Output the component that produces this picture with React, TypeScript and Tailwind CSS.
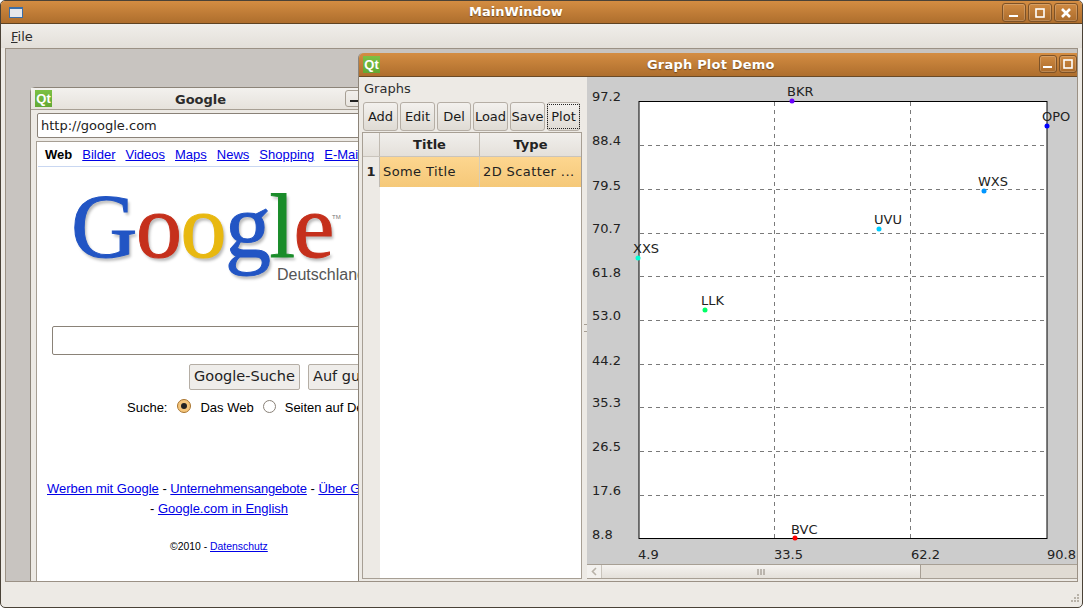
import type { ReactNode } from 'react'

const ui = { fontFamily: '"DejaVu Sans", sans-serif' }
const web = { fontFamily: '"Liberation Sans", Arial, sans-serif' }

const yTicks: [string, number][] = [['97.2', 96], ['88.4', 140], ['79.5', 185], ['70.7', 228], ['61.8', 272], ['53.0', 315], ['44.2', 360], ['35.3', 402], ['26.5', 446], ['17.6', 490], ['8.8', 534]]
const xTicks: [string, number][] = [['4.9', 638], ['33.5', 774], ['62.2', 911], ['90.8', 1047]]
const hGrid = [145, 189, 233, 276, 320, 364, 407, 451, 495]
const points = [
  { name: 'BKR', x: 792, y: 101, lx: 787, ly: 92, c: '#6a00ff' },
  { name: 'OPO', x: 1047, y: 126, lx: 1042, ly: 117, c: '#0000ff' },
  { name: 'WXS', x: 984, y: 191, lx: 978, ly: 182, c: '#0096ff' },
  { name: 'UVU', x: 879, y: 229, lx: 874, ly: 220, c: '#00ccff' },
  { name: 'XXS', x: 638, y: 258, lx: 633, ly: 249, c: '#00ffd5' },
  { name: 'LLK', x: 705, y: 310, lx: 701, ly: 301, c: '#00ff66' },
  { name: 'BVC', x: 795, y: 538, lx: 791, ly: 530, c: '#ff0000' },
]

function QtLogo() {
  return (
    <span className="flex h-[17px] w-[17px] shrink-0 items-center justify-center bg-gradient-to-b from-[#7cc043] to-[#62a833] text-[13px] leading-none font-bold text-white" style={web}>
      Qt
    </span>
  )
}

function WmButton({ kind, small }: { kind: 'min' | 'max' | 'close'; small?: boolean }) {
  return (
    <div className={`flex items-center justify-center rounded-[3px] border border-[#7d5227] bg-gradient-to-b from-[#cf8a42] to-[#ab6c2c] shadow-[inset_0_0_0_1px_rgba(255,255,255,0.18)] ${small ? 'h-[18px] w-[18px]' : 'h-[19px] w-[24px]'}`}>
      <svg width="12" height="12" viewBox="0 0 12 12">
        {kind === 'min' && <rect x="1" y="8" width="9" height="2" fill="#fff" />}
        {kind === 'max' && <rect x="2" y="2" width="8" height="8" fill="none" stroke="#fff" strokeWidth="1.6" />}
        {kind === 'close' && <path d="M2 2L10 10M10 2L2 10" stroke="#fff" strokeWidth="2.6" />}
      </svg>
    </div>
  )
}

function ToolButton({ children, w, focus }: { children: ReactNode; w: string; focus?: boolean }) {
  return (
    <div className={`flex h-[29px] items-center justify-center rounded-[3px] border border-[#b5aea5] bg-gradient-to-b from-[#f3f1ee] to-[#dfdbd4] text-[13px] text-[#1a1a1a] ${w}`}>
      {focus ? <span className="border border-dotted border-[#222] px-[3px] py-[3px] leading-[17px]">{children}</span> : children}
    </div>
  )
}

function Link({ children }: { children: ReactNode }) {
  return <span className="text-[#0000e6] underline">{children}</span>
}

function GoogleWindow() {
  return (
    <div className="absolute top-[38px] left-[24px] flex h-[500px] w-[340px] flex-col rounded-t-[5px] border border-[#8c8479] bg-[#edeae5]">
      <div className="relative flex h-[22px] shrink-0 items-center border-b border-[#a79f94] bg-gradient-to-b from-[#f3f1ee] to-[#e6e2dc] pl-[4px]">
        <QtLogo />
        <span className="absolute top-[2px] left-[144px] text-[13px] font-bold text-[#2c2c2c]" style={ui}>Google</span>
        <div className="absolute left-[314px] h-[17px] w-[24px] rounded-[3px] border border-[#a79f94]">
          <div className="mt-[9px] ml-[4px] h-[2px] w-[9px] bg-[#222]" />
        </div>
      </div>
      <div className="flex h-[31px] shrink-0 items-center pl-[6px]">
        <div className="flex h-[25px] w-[330px] items-center rounded-[2px] border border-[#8a8278] bg-white pl-[3px] text-[13px] text-[#222]" style={ui}>
          http://google.com
        </div>
      </div>
      <div className="ml-[5px] flex-1 overflow-hidden border-t border-l border-[#a79f94] bg-white whitespace-nowrap text-black" style={web}>
        <div className="mx-[1px] flex h-[25px] items-center gap-[10px] border-b border-[#c9d7f1] pt-[2px] pl-[7px] text-[13px]">
          <b>Web</b>
          <Link>Bilder</Link>
          <Link>Videos</Link>
          <Link>Maps</Link>
          <Link>News</Link>
          <Link>Shopping</Link>
          <Link>E-Mail</Link>
        </div>
        {/* logo */}
        <div className="relative mt-[13px] h-[130px] w-[320px]">
          <div className="absolute top-[-9px] left-[34px] flex text-[92px] leading-[110px] tracking-[-1.5px] [-webkit-text-stroke:1px_currentColor] [text-shadow:2px_3px_3px_rgba(0,0,0,0.28)]" style={{ fontFamily: '"Liberation Serif", serif' }}>
            <span className="text-[#2255c4]">G</span>
            <span className="text-[#c5301c]">o</span>
            <span className="text-[#e8b810]">o</span>
            <span className="text-[#2255c4]">g</span>
            <span className="text-[#1a8c2a]">l</span>
            <span className="text-[#c5301c]">e</span>
          </div>
          <span className="absolute top-[33px] left-[295px] text-[6px] text-[#777]">TM</span>
          <span className="absolute top-[83px] left-[240px] text-[16px] text-[#555]">Deutschland</span>
        </div>
        <div className="mt-[16px] ml-[15px] h-[29px] w-[340px] rounded-[2px] border border-[#8a8278] bg-white" />
        <div className="mt-[9px] ml-[152px] flex gap-[8px] text-[14.5px] text-[#222]" style={ui}>
          <div className="flex h-[26px] w-[111px] shrink-0 items-center justify-center rounded-[2px] border border-[#b5aea5] bg-[#efedea]">Google-Suche</div>
          <div className="flex h-[26px] w-[120px] shrink-0 items-center rounded-[2px] border border-[#b5aea5] bg-[#efedea] pl-[4px]">Auf gut Glück!</div>
        </div>
        <div className="mt-[8px] ml-[90px] flex items-center text-[13px]">
          <span>Suche:</span>
          <span className="mr-[9px] ml-[10px] -mt-[3px] flex h-[14px] w-[14px] shrink-0 items-center justify-center rounded-full border border-[#a8742f] bg-[#f5c67c]">
            <span className="h-[6px] w-[6px] rounded-full bg-[#222]" />
          </span>
          <span>Das Web</span>
          <span className="mr-[9px] ml-[9px] -mt-[3px] h-[13px] w-[13px] shrink-0 rounded-full border border-[#8a8278] bg-white" />
          <span>Seiten auf Deutschland</span>
        </div>
        <div className="mt-[61px] ml-[10px] text-[13px]">
          <Link>Werben mit Google</Link> - <span className="tracking-[-0.15px]"><Link>Unternehmensangebote</Link></span> - <Link>Über Google</Link>
        </div>
        <div className="mt-[1px] ml-[113px] text-[13px]">
          - <Link>Google.com in English</Link>
        </div>
        <div className="mt-[20px] ml-[133px] text-[10.4px]">
          ©2010 - <Link>Datenschutz</Link>
        </div>
      </div>
    </div>
  )
}

function GraphsPanel() {
  return (
    <div className="flex w-[225px] shrink-0 flex-col bg-[#edeae5]" style={ui}>
      <div className="flex h-[25px] items-center pb-[2px] pl-[5px] text-[13px] text-[#2c2c2c]">Graphs</div>
      <div className="flex gap-[2px] pl-[4px]">
        <ToolButton w="w-[35px]">Add</ToolButton>
        <ToolButton w="w-[35px]">Edit</ToolButton>
        <ToolButton w="w-[34px]">Del</ToolButton>
        <ToolButton w="w-[35px]">Load</ToolButton>
        <ToolButton w="w-[35px]">Save</ToolButton>
        <ToolButton w="w-[33px]" focus>Plot</ToolButton>
      </div>
      <div className="mt-[1px] ml-[3px] flex w-[220px] flex-1 flex-col border border-[#a79f94] bg-white text-[13px] text-[#222]">
        <div className="flex h-[24px] border-b border-[#c9c4bc] bg-gradient-to-b from-[#f1efec] to-[#e4e0da] font-bold">
          <div className="w-[17px] border-r border-[#c0bab1]" />
          <div className="flex w-[100px] items-center justify-center border-r border-[#c0bab1]">Title</div>
          <div className="flex flex-1 items-center justify-center">Type</div>
        </div>
        <div className="flex h-[30px]">
          <div className="flex w-[17px] items-center justify-center border-r border-[#c0bab1] bg-[#edeae5] font-bold">1</div>
          <div className="flex w-[100px] items-center border-r border-[#d6cdb8] bg-gradient-to-b from-[#fdd68f] to-[#f5c878] pl-[3px] tracking-[0.4px]">Some Title</div>
          <div className="flex flex-1 items-center bg-gradient-to-b from-[#fdd68f] to-[#f5c878] pl-[3px] tracking-[0.4px]">2D Scatter ...</div>
        </div>
        <div className="flex flex-1">
          <div className="w-[17px] bg-[#edeae5]" />
        </div>
      </div>
    </div>
  )
}

function PlotArea() {
  // svg origin sits at the panel's corner, coordinates below are page coordinates
  return (
    <div className="relative flex-1 overflow-hidden bg-[#cccccc]">
      <svg width="492" height="486" viewBox="587 77 492 486" className="block">
        <rect x="639" y="101.5" width="408" height="437" fill="#fff" stroke="#000" />
        {hGrid.map((y) => (
          <line key={y} x1="640" x2="1046" y1={y + 0.5} y2={y + 0.5} stroke="#7a7a7a" strokeDasharray="4 4" />
        ))}
        {[774, 910].map((x) => (
          <line key={x} x1={x + 0.5} x2={x + 0.5} y1="102" y2="538" stroke="#7a7a7a" strokeDasharray="4 4" />
        ))}
        <g fontSize="13" fill="#222" style={ui}>
          {yTicks.map(([t, y]) => (
            <text key={t} x="592" y={y + 5}>{t}</text>
          ))}
          {xTicks.map(([t, x]) => (
            <text key={t} x={x} y="559">{t}</text>
          ))}
          {points.map((p) => (
            <text key={p.name} x={p.lx} y={p.ly + 4}>{p.name}</text>
          ))}
        </g>
        {points.map((p) => (
          <circle key={p.name} cx={p.x} cy={p.y} r="2.5" fill={p.c} />
        ))}
      </svg>
      {/* horizontal scrollbar */}
      <div className="absolute right-0 bottom-0 left-0 flex h-[15px] border-y border-[#a79f94] bg-[#e0dbd3]">
        <div className="flex w-[15px] items-center justify-center border-r border-[#c9c4bc] bg-[#f3f1ee]">
          <svg width="6" height="9" viewBox="0 0 6 9"><path d="M5 1L1.5 4.5L5 8" fill="none" stroke="#b8b2a8" strokeWidth="1.6" /></svg>
        </div>
        <div className="flex w-[319px] items-center justify-center border-r border-[#a79f94] bg-gradient-to-b from-[#f5f3f0] to-[#e4e0da]">
          <svg width="8" height="6" viewBox="0 0 8 6"><path d="M1 0V6M4 0V6M7 0V6" stroke="#8a8278" /></svg>
        </div>
      </div>
    </div>
  )
}

function GraphWindow() {
  return (
    <div className="absolute top-[4px] left-[352px] flex h-[528px] w-[719px] flex-col rounded-t-[5px] border-l border-[#8c8479]">
      <div className="relative flex h-[24px] shrink-0 items-center rounded-tl-[5px] border-b border-[#6b4a26] bg-gradient-to-b from-[#d48d42] to-[#ae6e2d] pl-[4px]">
        <QtLogo />
        <span className="absolute left-[288px] text-[13px] font-bold tracking-[0.2px] text-white [text-shadow:0_1px_1px_rgba(0,0,0,0.4)]" style={ui}>Graph Plot Demo</span>
        <div className="absolute top-[2px] right-0 flex gap-[2px]">
          <WmButton kind="min" small />
          <WmButton kind="max" small />
        </div>
      </div>
      <div className="flex flex-1 bg-[#edeae5] pb-[2px]">
        <GraphsPanel />
        <div className="relative w-[3px] shrink-0">
          <div className="absolute top-[247px] left-[0px] h-[8px] w-[3px] border-y border-[#a79f94]" />
        </div>
        <PlotArea />
      </div>
    </div>
  )
}

export default function App() {
  return (
    <div className="flex h-[608px] w-[1083px] flex-col overflow-hidden rounded-[5px] border border-[#4a4237] bg-[#edeae5]" style={ui}>
      <div className="relative flex h-[23px] shrink-0 items-center border-b border-[#5f4322] bg-gradient-to-b from-[#d48d42] to-[#ae6e2d] pl-[8px]">
        <div className="h-[11px] w-[14px] border border-t-2 border-[#3b6ea8] bg-[#e6e8ec]" />
        <span className="absolute left-[468px] text-[13px] font-bold text-white [text-shadow:0_1px_1px_rgba(0,0,0,0.4)]">MainWindow</span>
        <div className="absolute top-[2px] right-[4px] flex gap-[2px]">
          <WmButton kind="min" />
          <WmButton kind="max" />
          <WmButton kind="close" />
        </div>
      </div>
      <div className="flex h-[24px] shrink-0 items-center bg-gradient-to-b from-[#f0eeea] to-[#e3dfd9] pt-[1px] pl-[10px] text-[13px] text-[#2c2c2c]">
        <span><span className="underline">F</span>ile</span>
      </div>
      <div className="relative mx-[4px] flex-1 overflow-hidden border border-[#9b9185] bg-[#c8c4c0]">
        <GoogleWindow />
        <GraphWindow />
      </div>
      <div className="relative h-[25px] shrink-0">
        <svg width="12" height="12" viewBox="0 0 12 12" className="absolute right-[2px] bottom-[2px]" fill="#b8b2a8">
          <rect x="9" y="1" width="2" height="2" /><rect x="6" y="4" width="2" height="2" /><rect x="9" y="4" width="2" height="2" />
          <rect x="3" y="7" width="2" height="2" /><rect x="6" y="7" width="2" height="2" /><rect x="9" y="7" width="2" height="2" />
        </svg>
      </div>
    </div>
  )
}
